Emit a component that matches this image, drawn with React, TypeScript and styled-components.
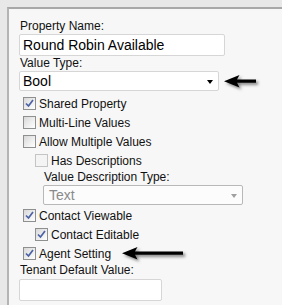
import React from 'react'
import styled, { createGlobalStyle, css } from 'styled-components'

const GlobalStyle = createGlobalStyle`
  html, body {
    margin: 0;
    padding: 0;
    width: 282px;
    height: 305px;
    overflow: hidden;
    background: #e8e8e8;
  }
  body {
    font-family: "Liberation Sans", Arial, sans-serif;
    color: #111;
  }
`

const Frame = styled.div`
  box-sizing: border-box;
  height: 305px;
  padding: 7px 0 0 7px;
`

const Panel = styled.div`
  box-sizing: border-box;
  height: 100%;
  background: #f7f7f7;
  border-top: 2px solid #a8a8a8;
  border-left: 2px solid #b4b4b4;
  padding: 10px 0 0 10px;
`

const Label = styled.div<{ $indent?: number; $gap?: number }>`
  font-size: 12px;
  line-height: 14px;
  padding-left: ${p => 1 + (p.$indent || 0)}px;
  margin-top: ${p => p.$gap || 0}px;
  white-space: nowrap;
`

const TextInput = styled.input<{ $width: number; $gap?: number }>`
  display: block;
  box-sizing: border-box;
  width: ${p => p.$width}px;
  height: 22px;
  margin: ${p => (p.$gap ?? 1)}px 0 0;
  padding: 0 3px;
  border: 1px solid #d6d6d6;
  border-radius: 2px;
  background: #fff;
  font-family: "Liberation Sans", Arial, sans-serif;
  font-size: 14px;
  color: #000;
  outline: none;
`

const SelectRow = styled.div<{ $indent?: number }>`
  display: flex;
  align-items: center;
  margin-top: 1px;
  padding-left: ${p => p.$indent || 0}px;
`

const Select = styled.div<{ $disabled?: boolean }>`
  box-sizing: border-box;
  width: 200px;
  height: 20px;
  display: flex;
  align-items: center;
  justify-content: space-between;
  border: 1px solid #d6d6d6;
  border-radius: 2px;
  background: #fff;
  font-size: 14px;
  color: #000;
  padding: 0 5px 0 3px;

  ${p => p.$disabled && css`
    border-color: #b8b8b8;
    background: #fcfcfc;
    color: #8a8a8a;
    padding-left: 5px;
  `}
`

const Caret = styled.span<{ $disabled?: boolean }>`
  width: 0;
  height: 0;
  margin-top: 1px;
  border-left: 3.5px solid transparent;
  border-right: 3.5px solid transparent;
  border-top: 4px solid ${p => (p.$disabled ? '#a0a0a0' : '#000')};
`

const CheckList = styled.div<{ $gap?: number }>`
  margin-top: ${p => p.$gap || 0}px;
`

const CheckRow = styled.div<{ $indent?: number }>`
  display: flex;
  align-items: center;
  height: 19px;
  padding-left: ${p => 4 + (p.$indent || 0)}px;
  font-size: 12px;
  white-space: nowrap;
`

const Box = styled.span<{ $disabled?: boolean }>`
  box-sizing: border-box;
  width: 13px;
  height: 13px;
  flex: none;
  margin-right: 3px;
  border: 1px solid #8e8f8f;
  background: linear-gradient(135deg, #d8d8d8 0%, #f0f0f0 60%, #fff 100%);
  display: flex;
  align-items: center;
  justify-content: center;

  ${p => p.$disabled && css`
    border-color: #c4c4c4;
    background: #f4f4f4;
  `}
`

const ArrowSvg = styled.svg<{ $gap: number }>`
  flex: none;
  margin-left: ${p => p.$gap}px;
  filter: drop-shadow(2px 2px 1.5px rgba(0, 0, 0, 0.5));
`

function Arrow({ length, gap }: { length: number; gap: number }) {
  return (
    <ArrowSvg $gap={gap} width={length + 2} height={15} viewBox={`0 0 ${length + 2} 15`}>
      <path
        d={`M1 7.2 L16.5 1 L14 5.6 L${length} 5.6 L${length} 8.8 L14 8.8 L16.5 13.5 Z`}
        fill="#000"
      />
    </ArrowSvg>
  )
}

function CheckBox({ checked, disabled }: { checked?: boolean; disabled?: boolean }) {
  return (
    <Box $disabled={disabled}>
      {checked && (
        <svg width="9" height="9" viewBox="0 0 9 9">
          <path d="M1 4.5 L3.5 7 L8 1" fill="none" stroke="#4a62a6" strokeWidth="1.7" />
        </svg>
      )}
    </Box>
  )
}

type Item = { label: string; checked?: boolean; disabled?: boolean; indent?: number; arrow?: boolean }

const topChecks: Item[] = [
  { label: 'Shared Property', checked: true },
  { label: 'Multi-Line Values' },
  { label: 'Allow Multiple Values' },
  { label: 'Has Descriptions', disabled: true, indent: 12 },
]

const bottomChecks: Item[] = [
  { label: 'Contact Viewable', checked: true },
  { label: 'Contact Editable', checked: true, indent: 12 },
  { label: 'Agent Setting', checked: true, arrow: true },
]

function Checks({ items, gap }: { items: Item[]; gap?: number }) {
  return (
    <CheckList $gap={gap}>
      {items.map(it => (
        <CheckRow key={it.label} $indent={it.indent}>
          <CheckBox checked={it.checked} disabled={it.disabled} />
          {it.label}
          {it.arrow && <Arrow length={62} gap={10} />}
        </CheckRow>
      ))}
    </CheckList>
  )
}

export default function App() {
  return (
    <>
      <GlobalStyle />
      <Frame>
        <Panel>
          <Label>Property Name:</Label>
          <TextInput $width={206} value="Round Robin Available" readOnly />
          <Label>Value Type:</Label>
          <SelectRow>
            <Select>
              Bool
              <Caret />
            </Select>
            <Arrow length={33} gap={4} />
          </SelectRow>
          <Checks items={topChecks} gap={3} />
          <Label $indent={24}>Value Description Type:</Label>
          <SelectRow $indent={24}>
            <Select $disabled>
              Text
              <Caret $disabled />
            </Select>
          </SelectRow>
          <Checks items={bottomChecks} gap={1} />
          <Label>Tenant Default Value:</Label>
          <TextInput $width={143} $gap={2} value="" readOnly />
        </Panel>
      </Frame>
    </>
  )
}
